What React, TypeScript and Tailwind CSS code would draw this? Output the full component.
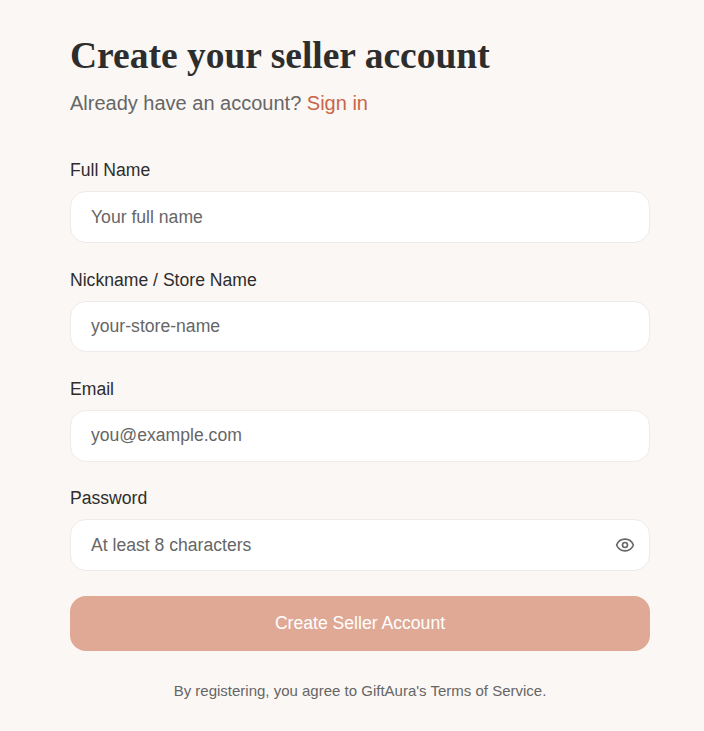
import { Eye } from 'lucide-react';

const fields = [
  { label: 'Full Name', placeholder: 'Your full name', type: 'text' },
  { label: 'Nickname / Store Name', placeholder: 'your-store-name', type: 'text' },
  { label: 'Email', placeholder: 'you@example.com', type: 'email' },
  { label: 'Password', placeholder: 'At least 8 characters', type: 'password' },
];

export default function App() {
  return (
    <div className="min-h-[731px] bg-[#fbf7f4] font-['Liberation_Sans',sans-serif] pl-[70px] pt-[32px]">
      <div className="w-[580px]">
        <h1 className="font-['Liberation_Serif',serif] font-bold text-[37.5px] leading-[48px] text-[#2d2d2d]">
          Create your seller account
        </h1>
        <p className="mt-[9px] text-[20px] leading-[28px] text-[#666666]">
          Already have an account? <a className="text-[#c8664a]">Sign in</a>
        </p>

        <form className="mt-[39.4px] flex flex-col gap-[22.73px]">
          {fields.map((field) => (
            <div key={field.label}>
              <label className="block text-[17.6px] leading-[28px] text-[#2d2d2d] mb-[7px]">{field.label}</label>
              <div className="relative">
                <input
                  type={field.type}
                  placeholder={field.placeholder}
                  className="block w-full h-[51.6px] px-[20px] bg-white border border-[#f0ebe8] rounded-[16px] text-[17.6px] outline-none placeholder:text-[#666666]"
                />
                {field.type === 'password' && (
                  <Eye className="absolute right-[15px] top-[16px] text-[#666666]" size={20} strokeWidth={2} />
                )}
              </div>
            </div>
          ))}

          <button
            type="button"
            className="mt-[2.4px] h-[55px] rounded-[16px] bg-[#dfa996] text-white text-[17.6px] font-medium"
          >
            Create Seller Account
          </button>
        </form>

        <p className="mt-[30px] text-center text-[15px] leading-[20px] text-[#666666]">
          By registering, you agree to GiftAura's Terms of Service.
        </p>
      </div>
    </div>
  );
}
